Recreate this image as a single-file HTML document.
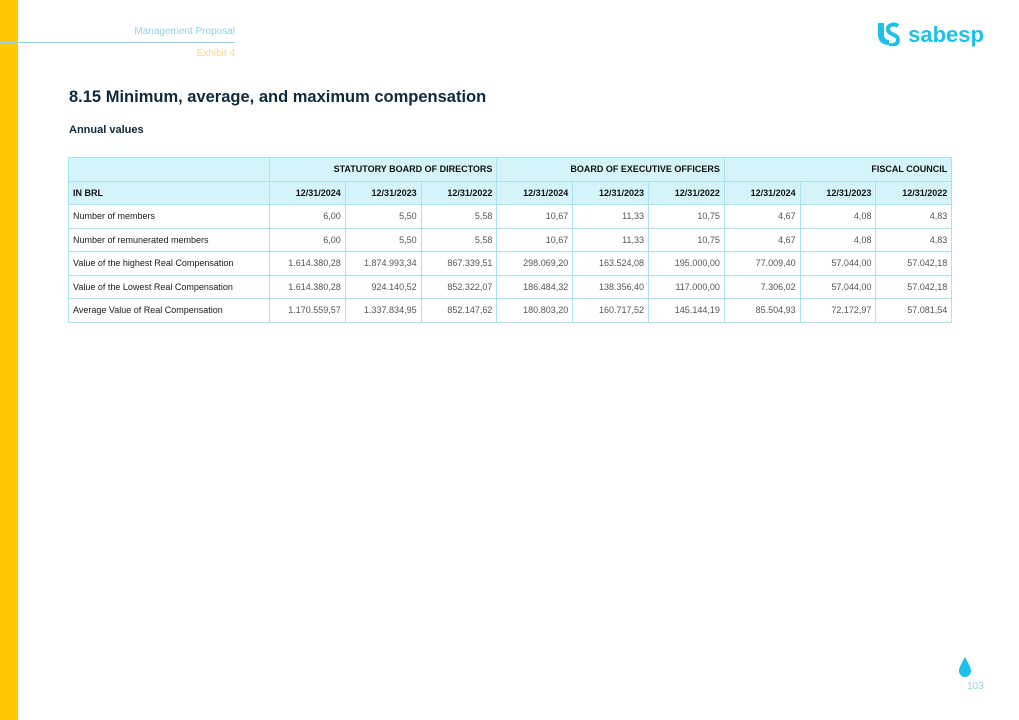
<!DOCTYPE html>
<html><head><meta charset="utf-8"><style>
body{margin:0;width:1019px;height:720px;background:#fff;position:relative;overflow:hidden;font-family:"Liberation Sans",sans-serif}
.bar{position:absolute;left:0;top:0;width:18px;height:720px;background:#ffc800}
.mp{position:absolute;right:784px;top:26px;font-size:10px;color:#8fd3e3}
.line{position:absolute;left:0;top:42px;width:235px;height:1px;background:#8fd3e3}
.ex{position:absolute;right:784px;top:48px;font-size:10px;color:#f0d98a}
h1{position:absolute;left:69px;top:88px;margin:0;font-size:16.5px;color:#0f2a3d;font-weight:bold}
.av{position:absolute;left:69px;top:124px;font-size:11px;color:#0f2a3d;font-weight:bold}
table{position:absolute;left:68px;top:157px;border-collapse:collapse;font-size:9px;color:#222;table-layout:fixed;width:883px}
td{border:1px solid #a8e4ef;height:22.5px;padding:0 4px;text-align:right;color:#555;white-space:nowrap;overflow:hidden}
td:first-child{text-align:left;color:#1a1a1a}
tr.h td{background:#d4f4fa;font-weight:bold;color:#111}
.logo{position:absolute;left:876px;top:22px;font-size:22px;font-weight:bold;color:#1ec0e8}
.pn{position:absolute;left:967px;top:681px;font-size:10px;color:#8fd3e3}
</style></head><body>
<div class="bar"></div>
<div class="mp">Management Proposal</div><div class="line"></div><div class="ex">Exhibit 4</div>
<div class="logo"><svg width="26" height="24" viewBox="0 0 26 24" style="vertical-align:-4px"><path d="M2 1h6v12c0 3 2 5 5 5l0 5C6 23 2 19 2 13z" fill="#1ec0e8"/><path d="M22 4c-4-3-11-1-10 4 1 5 10 4 10 10 0 4-5 6-9 5" stroke="#1ec0e8" stroke-width="4" fill="none"/></svg> sabesp</div>
<h1>8.15 Minimum, average, and maximum compensation</h1>
<div class="av">Annual values</div>
<table>
<colgroup><col style="width:201px"><col span="9" style="width:75.8px"></colgroup>
<tr class="h"><td></td><td colspan="3">STATUTORY BOARD OF DIRECTORS</td><td colspan="3">BOARD OF EXECUTIVE OFFICERS</td><td colspan="3">FISCAL COUNCIL</td></tr>
<tr class="h"><td>IN BRL</td><td>12/31/2024</td><td>12/31/2023</td><td>12/31/2022</td><td>12/31/2024</td><td>12/31/2023</td><td>12/31/2022</td><td>12/31/2024</td><td>12/31/2023</td><td>12/31/2022</td></tr>
<tr><td>Number of members</td><td>6,00</td><td>5,50</td><td>5,58</td><td>10,67</td><td>11,33</td><td>10,75</td><td>4,67</td><td>4,08</td><td>4,83</td></tr>
<tr><td>Number of remunerated members</td><td>6,00</td><td>5,50</td><td>5,58</td><td>10,67</td><td>11,33</td><td>10,75</td><td>4,67</td><td>4,08</td><td>4,83</td></tr>
<tr><td>Value of the highest Real Compensation</td><td>1.614.380,28</td><td>1.874.993,34</td><td>867.339,51</td><td>298.069,20</td><td>163.524,08</td><td>195.000,00</td><td>77.009,40</td><td>57.044,00</td><td>57.042,18</td></tr>
<tr><td>Value of the Lowest Real Compensation</td><td>1.614.380,28</td><td>924.140,52</td><td>852.322,07</td><td>186.484,32</td><td>138.356,40</td><td>117.000,00</td><td>7.306,02</td><td>57.044,00</td><td>57.042,18</td></tr>
<tr><td>Average Value of Real Compensation</td><td>1.170.559,57</td><td>1.337.834,95</td><td>852.147,62</td><td>180.803,20</td><td>160.717,52</td><td>145.144,19</td><td>85.504,93</td><td>72.172,97</td><td>57.081,54</td></tr>
</table>
<svg style="position:absolute;left:959px;top:657px" width="12" height="20" viewBox="0 0 12 20"><path d="M6 0C3 6 0 10 0 14a6 6 0 0012 0C12 10 9 6 6 0z" fill="#1ec0e8"/></svg>
<div class="pn">103</div>
</body></html>
